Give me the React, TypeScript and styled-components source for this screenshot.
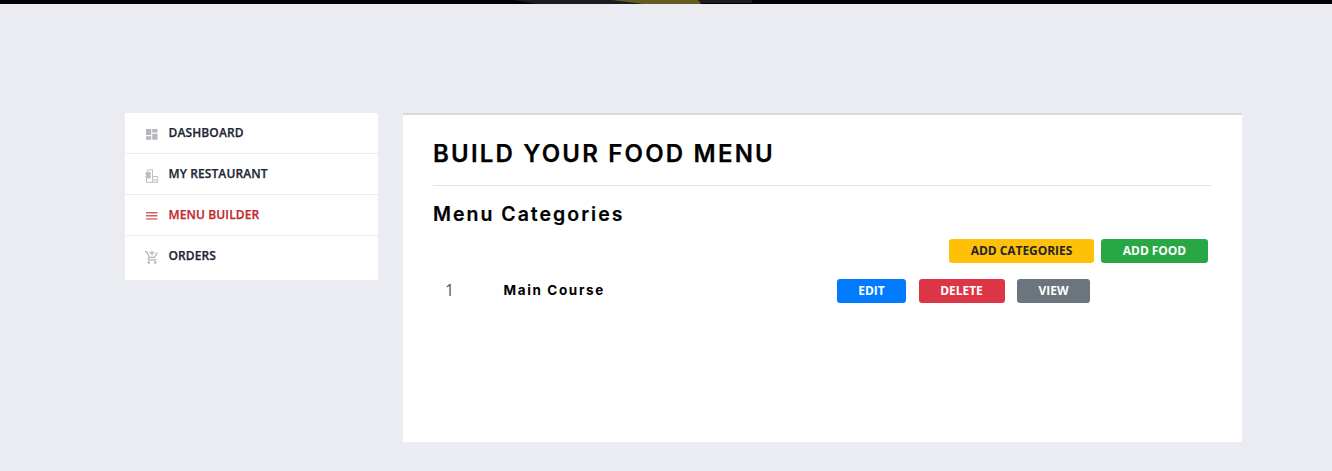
import React from 'react';
import styled, { createGlobalStyle } from 'styled-components';

const GlobalStyle = createGlobalStyle`
  * { box-sizing: border-box; }
  body {
    margin: 0;
    background: #ebecf1;
    font-family: "Open Sans", sans-serif;
    color: #2c304d;
  }
`;

const Page = styled.div`
  height: 471px;
  overflow: hidden;
`;

const Banner = styled.div`
  height: 4px;
  background: #010002;
  display: flex;
  justify-content: flex-start;
  padding-left: 514px;
  svg { display: block; }
`;

const Layout = styled.main`
  display: flex;
  align-items: flex-start;
  gap: 25px;
  padding: 109px 90px 0 125px;
`;

const SideNav = styled.nav`
  width: 253px;
  height: 167px;
  background: #fff;
`;

const NavItem = styled.a<{ $active?: boolean }>`
  display: flex;
  align-items: center;
  height: 41px;
  padding: 0 0 1px 20px;
  border-bottom: 1px solid #ebecf1;
  color: ${(p) => (p.$active ? '#c0282c' : '#222533')};
  font-size: 12px;
  font-weight: 600;
  line-height: 18px;
  letter-spacing: 0.12px;
  -webkit-text-stroke: 0.25px currentColor;
  &:last-child { border-bottom: 0; }
`;

const NavIcon = styled.svg<{ $color: string }>`
  width: 14px;
  height: 14px;
  margin: 4px 9.5px 0 0;
  fill: ${(p) => p.$color};
  stroke: none;
  flex: none;
`;

const IconOutline = styled.path`
  fill: none;
  stroke: #bfc0c3;
`;

const Panel = styled.section`
  width: 839px;
  height: 329px;
  padding: 0 30px;
  background: #fff;
  border-top: 2px solid #d9d9dc;
`;

const Title = styled.h1`
  height: 71px;
  margin: 0;
  padding-top: 24px;
  border-bottom: 1px solid #e4e4e4;
  color: #000;
  font: 600 24px/30px Inter, sans-serif;
  letter-spacing: 2.2px;
  white-space: nowrap;
  -webkit-text-stroke: 0.25px #000;
`;

const Subtitle = styled.h2`
  margin: 15px 0 0;
  color: #000;
  font: 600 19.5px/26px Inter, sans-serif;
  letter-spacing: 2px;
  -webkit-text-stroke: 0.2px #000;
`;

const Toolbar = styled.div`
  display: flex;
  justify-content: flex-end;
  gap: 7px;
  margin: 12px 4px 0 0;
`;

const tones = {
  warning: ['#ffc107', '#212529'],
  success: ['#28a745', '#fff'],
  primary: ['#007bff', '#fff'],
  danger: ['#dc3545', '#fff'],
  secondary: ['#6c757d', '#fff'],
};

const Button = styled.button<{ $tone: keyof typeof tones; $width: number }>`
  width: ${(p) => p.$width}px;
  height: 24px;
  padding: 0 0 1px;
  border: 0;
  border-radius: 3.2px;
  background: ${(p) => tones[p.$tone][0]};
  color: ${(p) => tones[p.$tone][1]};
  font: 700 12px/18px "Open Sans", sans-serif;
  letter-spacing: -0.05px;
  white-space: nowrap;
`;

const CategoryRow = styled.div`
  display: grid;
  grid-template-columns: 58px 334px auto;
  align-items: center;
  height: 24px;
  margin: 16px 0 0 12px;
`;

const Index = styled.span`
  margin-bottom: 2px;
  color: #55565a;
  font-size: 16px;
  font-weight: 400;
  line-height: 22px;
`;

const Name = styled.h3`
  margin: 0 0 2px 0.6px;
  color: #000;
  font: 700 13.5px/20px Inter, sans-serif;
  letter-spacing: 1.62px;
`;

const Actions = styled.div`
  display: flex;
  gap: 12.5px;
`;

export default function App() {
  return (
    <>
      <GlobalStyle />
      <Page>
        <Banner>
          <svg width="238" height="4" viewBox="0 0 238 4">
            <path d="M0 0H238V3H186V4H22Z" fill="#1c1c1d" />
            <path d="M98 0H184L187 4H129Z" fill="#655b20" />
          </svg>
        </Banner>
        <Layout>
          <SideNav>
            <NavItem>
              <NavIcon viewBox="0 0 14 14" $color="#b5b7bf">
                <path d="M1 1H6.3V7H1ZM7.2 1H12.5V4.6H7.2ZM1 8.2H6.3V11.8H1ZM7.2 5.8H12.5V11.8H7.2Z" />
              </NavIcon>
              DASHBOARD
            </NavItem>
            <NavItem>
              <NavIcon viewBox="0 1 14 14" $color="#bfc0c3">
                <path d="M1 4H5.5V10.5H1ZM0 5H6V6H0ZM0 8H6V9H0Z" />
                <IconOutline d="M2.5 4V2.2L7.5 1.5V14M1.5 10V14.3H13M8 8.5H12.7V10.5L13.3 12H8M12 12V14" />
              </NavIcon>
              MY RESTAURANT
            </NavItem>
            <NavItem $active>
              <NavIcon viewBox="0 0 14 14" $color="#cd6265">
                <path d="M1 2H12.5V3.4H1ZM1 5.1H12.5V6.5H1Z" />
                <path d="M1 8H12.5V9.8H1Z" opacity=".75" />
              </NavIcon>
              MENU BUILDER
            </NavItem>
            <NavItem>
              <NavIcon viewBox="1 2 22 22" $color="#b2b4bd">
                <path d="M11 9h2V6h3V4h-3V1h-2v3H8v2h3v3zm-4 9c-1.1 0-1.99.9-1.99 2S5.9 22 7 22s2-.9 2-2-.9-2-2-2zm10 0c-1.1 0-1.99.9-1.99 2s.89 2 1.99 2 2-.9 2-2-.9-2-2-2zm-9.83-3.25.03-.12.9-1.63h7.45c.75 0 1.41-.41 1.75-1.03l3.86-7.01L19.42 4h-.01l-1.1 2-2.76 5H8.53l-.13-.27L6.16 6l-.95-2-.94-2H1v2h2l3.6 7.59-1.35 2.45c-.16.28-.25.61-.25.96 0 1.1.9 2 2 2h12v-2H7.42c-.13 0-.25-.11-.25-.25z" />
              </NavIcon>
              ORDERS
            </NavItem>
          </SideNav>
          <Panel>
            <Title>BUILD YOUR FOOD MENU</Title>
            <Subtitle>Menu Categories</Subtitle>
            <Toolbar>
              <Button $tone="warning" $width={145}>ADD CATEGORIES</Button>
              <Button $tone="success" $width={107}>ADD FOOD</Button>
            </Toolbar>
            <CategoryRow>
              <Index>1</Index>
              <Name>Main Course</Name>
              <Actions>
                <Button $tone="primary" $width={69}>EDIT</Button>
                <Button $tone="danger" $width={86}>DELETE</Button>
                <Button $tone="secondary" $width={73}>VIEW</Button>
              </Actions>
            </CategoryRow>
          </Panel>
        </Layout>
      </Page>
    </>
  );
}
